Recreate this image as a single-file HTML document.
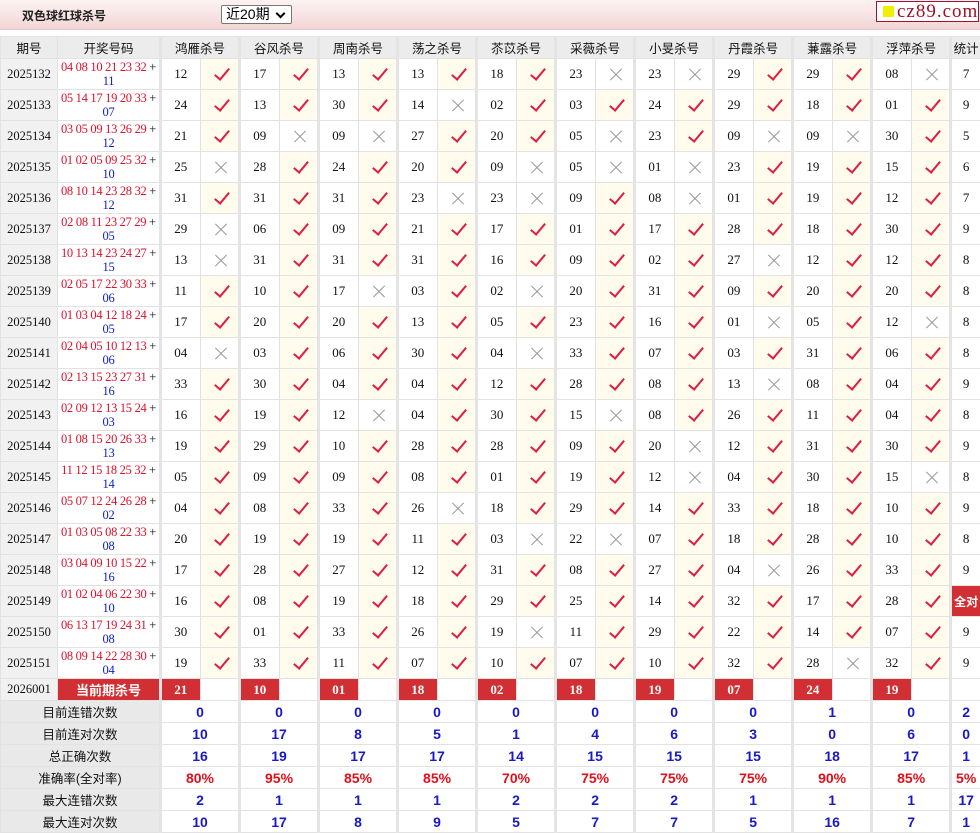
<!DOCTYPE html>
<html><head><meta charset="utf-8"><style>
*{margin:0;padding:0;box-sizing:border-box}
body{width:980px;height:833px;background:#fff;font-family:"Liberation Serif","Noto Serif CJK SC",serif;overflow:hidden;position:relative}
.top{position:absolute;left:0;top:0;width:980px;height:30px;background:linear-gradient(#fdf3f3,#f3d6d6);border-bottom:1px solid #e6caca}
.title{position:absolute;left:22px;top:7px;font:bold 12px "Liberation Sans","Noto Sans CJK SC",sans-serif;color:#222}
.sel{position:absolute;left:221px;top:5px;width:71px;height:19px;border:1px solid #777;border-radius:2px;background:#fff;font:14px "Liberation Sans","Noto Sans CJK SC",sans-serif;padding-left:4px;line-height:17px}
.sel:after{content:"";position:absolute;right:7px;top:4px;width:5px;height:5px;border-right:2px solid #000;border-bottom:2px solid #000;transform:rotate(45deg)}
.logo{position:absolute;left:876px;top:1px;width:103px;height:21px;border:1px solid #a01030;background:#fff;font:19px "Liberation Serif",serif;color:#a0102a;line-height:19px;padding-left:20px;letter-spacing:1px}
.logo:before{content:"";position:absolute;left:6px;top:4px;width:11px;height:11px;background:#f0f000}
table{position:absolute;left:0;top:36px;width:980px;border-collapse:collapse;table-layout:fixed}
td,th{border:1px solid #e2e2e2;text-align:center;font-size:13px;color:#111;padding:0;position:relative;overflow:hidden}
th{height:22px;background:#ececec;font:normal 12.5px "Liberation Sans","Noto Sans CJK SC",sans-serif}
tr.d td{height:31px}
td.q{background:#f1f1f1;font-size:12.5px}
td.k{line-height:14px;font-size:12.5px;text-align:center;white-space:nowrap;letter-spacing:-0.3px}
td.k i{font-style:normal;color:#e0102a}
td.k b{font-weight:normal;color:#1020d0}
.g{border-left:3px solid #e4e4e4}
td.y{background:#fffcee}
td.y:after{content:"";position:absolute;left:17px;top:50%;margin-top:-9px;width:6px;height:13px;border-right:2px solid #dd2040;border-bottom:2px solid #dd2040;transform:rotate(40deg)}
td.x:before,td.x:after{content:"";position:absolute;left:12px;top:50%;width:16px;height:1px;background:#9a9a9a;transform:rotate(45deg)}
td.x:after{transform:rotate(-45deg)}
tr.c td{height:22px}
td.r{background:#d12f33;color:#fff;font-weight:bold;font-size:13px}
td.rl{background:#d12f33;color:#fff;font:bold 13px "Liberation Sans","Noto Sans CJK SC",sans-serif}
td.all{background:#d12f33;color:#fff;font:bold 12px "Liberation Sans","Noto Sans CJK SC",sans-serif}
tr.s td{height:22px;font:bold 14px "Liberation Sans",sans-serif;color:#1818c8}
tr.s td.l{background:#e9e9e9;font:12.5px "Liberation Sans","Noto Sans CJK SC",sans-serif;color:#111}
tr.p td{color:#e0101a}
</style></head><body>
<div class="top"><div class="title">双色球红球杀号</div><div class="sel">近20期</div><div class="logo">cz89.com</div></div>
<table>
<colgroup><col style="width:57px"><col style="width:103px"><col span="20" style="width:39.5px"><col style="width:30px"></colgroup>
<tr><th>期号</th><th>开奖号码</th><th class="g" colspan="2">鸿雁杀号</th><th class="g" colspan="2">谷风杀号</th><th class="g" colspan="2">周南杀号</th><th class="g" colspan="2">荡之杀号</th><th class="g" colspan="2">苶苡杀号</th><th class="g" colspan="2">采薇杀号</th><th class="g" colspan="2">小旻杀号</th><th class="g" colspan="2">丹霞杀号</th><th class="g" colspan="2">蒹露杀号</th><th class="g" colspan="2">浮萍杀号</th><th class="g">统计</th></tr>
<tr class="d"><td class="q">2025132</td><td class="k"><i>04 08 10 21 23 32</i> +<br><b>11</b></td><td class="g">12</td><td class="y"></td><td class="g">17</td><td class="y"></td><td class="g">13</td><td class="y"></td><td class="g">13</td><td class="y"></td><td class="g">18</td><td class="y"></td><td class="g">23</td><td class="x"></td><td class="g">23</td><td class="x"></td><td class="g">29</td><td class="y"></td><td class="g">29</td><td class="y"></td><td class="g">08</td><td class="x"></td><td class="g">7</td></tr>
<tr class="d"><td class="q">2025133</td><td class="k"><i>05 14 17 19 20 33</i> +<br><b>07</b></td><td class="g">24</td><td class="y"></td><td class="g">13</td><td class="y"></td><td class="g">30</td><td class="y"></td><td class="g">14</td><td class="x"></td><td class="g">02</td><td class="y"></td><td class="g">03</td><td class="y"></td><td class="g">24</td><td class="y"></td><td class="g">29</td><td class="y"></td><td class="g">18</td><td class="y"></td><td class="g">01</td><td class="y"></td><td class="g">9</td></tr>
<tr class="d"><td class="q">2025134</td><td class="k"><i>03 05 09 13 26 29</i> +<br><b>12</b></td><td class="g">21</td><td class="y"></td><td class="g">09</td><td class="x"></td><td class="g">09</td><td class="x"></td><td class="g">27</td><td class="y"></td><td class="g">20</td><td class="y"></td><td class="g">05</td><td class="x"></td><td class="g">23</td><td class="y"></td><td class="g">09</td><td class="x"></td><td class="g">09</td><td class="x"></td><td class="g">30</td><td class="y"></td><td class="g">5</td></tr>
<tr class="d"><td class="q">2025135</td><td class="k"><i>01 02 05 09 25 32</i> +<br><b>10</b></td><td class="g">25</td><td class="x"></td><td class="g">28</td><td class="y"></td><td class="g">24</td><td class="y"></td><td class="g">20</td><td class="y"></td><td class="g">09</td><td class="x"></td><td class="g">05</td><td class="x"></td><td class="g">01</td><td class="x"></td><td class="g">23</td><td class="y"></td><td class="g">19</td><td class="y"></td><td class="g">15</td><td class="y"></td><td class="g">6</td></tr>
<tr class="d"><td class="q">2025136</td><td class="k"><i>08 10 14 23 28 32</i> +<br><b>12</b></td><td class="g">31</td><td class="y"></td><td class="g">31</td><td class="y"></td><td class="g">31</td><td class="y"></td><td class="g">23</td><td class="x"></td><td class="g">23</td><td class="x"></td><td class="g">09</td><td class="y"></td><td class="g">08</td><td class="x"></td><td class="g">01</td><td class="y"></td><td class="g">19</td><td class="y"></td><td class="g">12</td><td class="y"></td><td class="g">7</td></tr>
<tr class="d"><td class="q">2025137</td><td class="k"><i>02 08 11 23 27 29</i> +<br><b>05</b></td><td class="g">29</td><td class="x"></td><td class="g">06</td><td class="y"></td><td class="g">09</td><td class="y"></td><td class="g">21</td><td class="y"></td><td class="g">17</td><td class="y"></td><td class="g">01</td><td class="y"></td><td class="g">17</td><td class="y"></td><td class="g">28</td><td class="y"></td><td class="g">18</td><td class="y"></td><td class="g">30</td><td class="y"></td><td class="g">9</td></tr>
<tr class="d"><td class="q">2025138</td><td class="k"><i>10 13 14 23 24 27</i> +<br><b>15</b></td><td class="g">13</td><td class="x"></td><td class="g">31</td><td class="y"></td><td class="g">31</td><td class="y"></td><td class="g">31</td><td class="y"></td><td class="g">16</td><td class="y"></td><td class="g">09</td><td class="y"></td><td class="g">02</td><td class="y"></td><td class="g">27</td><td class="x"></td><td class="g">12</td><td class="y"></td><td class="g">12</td><td class="y"></td><td class="g">8</td></tr>
<tr class="d"><td class="q">2025139</td><td class="k"><i>02 05 17 22 30 33</i> +<br><b>06</b></td><td class="g">11</td><td class="y"></td><td class="g">10</td><td class="y"></td><td class="g">17</td><td class="x"></td><td class="g">03</td><td class="y"></td><td class="g">02</td><td class="x"></td><td class="g">20</td><td class="y"></td><td class="g">31</td><td class="y"></td><td class="g">09</td><td class="y"></td><td class="g">20</td><td class="y"></td><td class="g">20</td><td class="y"></td><td class="g">8</td></tr>
<tr class="d"><td class="q">2025140</td><td class="k"><i>01 03 04 12 18 24</i> +<br><b>05</b></td><td class="g">17</td><td class="y"></td><td class="g">20</td><td class="y"></td><td class="g">20</td><td class="y"></td><td class="g">13</td><td class="y"></td><td class="g">05</td><td class="y"></td><td class="g">23</td><td class="y"></td><td class="g">16</td><td class="y"></td><td class="g">01</td><td class="x"></td><td class="g">05</td><td class="y"></td><td class="g">12</td><td class="x"></td><td class="g">8</td></tr>
<tr class="d"><td class="q">2025141</td><td class="k"><i>02 04 05 10 12 13</i> +<br><b>06</b></td><td class="g">04</td><td class="x"></td><td class="g">03</td><td class="y"></td><td class="g">06</td><td class="y"></td><td class="g">30</td><td class="y"></td><td class="g">04</td><td class="x"></td><td class="g">33</td><td class="y"></td><td class="g">07</td><td class="y"></td><td class="g">03</td><td class="y"></td><td class="g">31</td><td class="y"></td><td class="g">06</td><td class="y"></td><td class="g">8</td></tr>
<tr class="d"><td class="q">2025142</td><td class="k"><i>02 13 15 23 27 31</i> +<br><b>16</b></td><td class="g">33</td><td class="y"></td><td class="g">30</td><td class="y"></td><td class="g">04</td><td class="y"></td><td class="g">04</td><td class="y"></td><td class="g">12</td><td class="y"></td><td class="g">28</td><td class="y"></td><td class="g">08</td><td class="y"></td><td class="g">13</td><td class="x"></td><td class="g">08</td><td class="y"></td><td class="g">04</td><td class="y"></td><td class="g">9</td></tr>
<tr class="d"><td class="q">2025143</td><td class="k"><i>02 09 12 13 15 24</i> +<br><b>03</b></td><td class="g">16</td><td class="y"></td><td class="g">19</td><td class="y"></td><td class="g">12</td><td class="x"></td><td class="g">04</td><td class="y"></td><td class="g">30</td><td class="y"></td><td class="g">15</td><td class="x"></td><td class="g">08</td><td class="y"></td><td class="g">26</td><td class="y"></td><td class="g">11</td><td class="y"></td><td class="g">04</td><td class="y"></td><td class="g">8</td></tr>
<tr class="d"><td class="q">2025144</td><td class="k"><i>01 08 15 20 26 33</i> +<br><b>13</b></td><td class="g">19</td><td class="y"></td><td class="g">29</td><td class="y"></td><td class="g">10</td><td class="y"></td><td class="g">28</td><td class="y"></td><td class="g">28</td><td class="y"></td><td class="g">09</td><td class="y"></td><td class="g">20</td><td class="x"></td><td class="g">12</td><td class="y"></td><td class="g">31</td><td class="y"></td><td class="g">30</td><td class="y"></td><td class="g">9</td></tr>
<tr class="d"><td class="q">2025145</td><td class="k"><i>11 12 15 18 25 32</i> +<br><b>14</b></td><td class="g">05</td><td class="y"></td><td class="g">09</td><td class="y"></td><td class="g">09</td><td class="y"></td><td class="g">08</td><td class="y"></td><td class="g">01</td><td class="y"></td><td class="g">19</td><td class="y"></td><td class="g">12</td><td class="x"></td><td class="g">04</td><td class="y"></td><td class="g">30</td><td class="y"></td><td class="g">15</td><td class="x"></td><td class="g">8</td></tr>
<tr class="d"><td class="q">2025146</td><td class="k"><i>05 07 12 24 26 28</i> +<br><b>02</b></td><td class="g">04</td><td class="y"></td><td class="g">08</td><td class="y"></td><td class="g">33</td><td class="y"></td><td class="g">26</td><td class="x"></td><td class="g">18</td><td class="y"></td><td class="g">29</td><td class="y"></td><td class="g">14</td><td class="y"></td><td class="g">33</td><td class="y"></td><td class="g">18</td><td class="y"></td><td class="g">10</td><td class="y"></td><td class="g">9</td></tr>
<tr class="d"><td class="q">2025147</td><td class="k"><i>01 03 05 08 22 33</i> +<br><b>08</b></td><td class="g">20</td><td class="y"></td><td class="g">19</td><td class="y"></td><td class="g">19</td><td class="y"></td><td class="g">11</td><td class="y"></td><td class="g">03</td><td class="x"></td><td class="g">22</td><td class="x"></td><td class="g">07</td><td class="y"></td><td class="g">18</td><td class="y"></td><td class="g">28</td><td class="y"></td><td class="g">10</td><td class="y"></td><td class="g">8</td></tr>
<tr class="d"><td class="q">2025148</td><td class="k"><i>03 04 09 10 15 22</i> +<br><b>16</b></td><td class="g">17</td><td class="y"></td><td class="g">28</td><td class="y"></td><td class="g">27</td><td class="y"></td><td class="g">12</td><td class="y"></td><td class="g">31</td><td class="y"></td><td class="g">08</td><td class="y"></td><td class="g">27</td><td class="y"></td><td class="g">04</td><td class="x"></td><td class="g">26</td><td class="y"></td><td class="g">33</td><td class="y"></td><td class="g">9</td></tr>
<tr class="d"><td class="q">2025149</td><td class="k"><i>01 02 04 06 22 30</i> +<br><b>10</b></td><td class="g">16</td><td class="y"></td><td class="g">08</td><td class="y"></td><td class="g">19</td><td class="y"></td><td class="g">18</td><td class="y"></td><td class="g">29</td><td class="y"></td><td class="g">25</td><td class="y"></td><td class="g">14</td><td class="y"></td><td class="g">32</td><td class="y"></td><td class="g">17</td><td class="y"></td><td class="g">28</td><td class="y"></td><td class="g all">全对</td></tr>
<tr class="d"><td class="q">2025150</td><td class="k"><i>06 13 17 19 24 31</i> +<br><b>08</b></td><td class="g">30</td><td class="y"></td><td class="g">01</td><td class="y"></td><td class="g">33</td><td class="y"></td><td class="g">26</td><td class="y"></td><td class="g">19</td><td class="x"></td><td class="g">11</td><td class="y"></td><td class="g">29</td><td class="y"></td><td class="g">22</td><td class="y"></td><td class="g">14</td><td class="y"></td><td class="g">07</td><td class="y"></td><td class="g">9</td></tr>
<tr class="d"><td class="q">2025151</td><td class="k"><i>08 09 14 22 28 30</i> +<br><b>04</b></td><td class="g">19</td><td class="y"></td><td class="g">33</td><td class="y"></td><td class="g">11</td><td class="y"></td><td class="g">07</td><td class="y"></td><td class="g">10</td><td class="y"></td><td class="g">07</td><td class="y"></td><td class="g">10</td><td class="y"></td><td class="g">32</td><td class="y"></td><td class="g">28</td><td class="x"></td><td class="g">32</td><td class="y"></td><td class="g">9</td></tr>
<tr class="c"><td class="q">2026001</td><td class="rl">当前期杀号</td><td class="g r">21</td><td></td><td class="g r">10</td><td></td><td class="g r">01</td><td></td><td class="g r">18</td><td></td><td class="g r">02</td><td></td><td class="g r">18</td><td></td><td class="g r">19</td><td></td><td class="g r">07</td><td></td><td class="g r">24</td><td></td><td class="g r">19</td><td></td><td class="g"></td></tr>
<tr class="s"><td class="l" colspan="2">目前连错次数</td><td class="g" colspan="2">0</td><td class="g" colspan="2">0</td><td class="g" colspan="2">0</td><td class="g" colspan="2">0</td><td class="g" colspan="2">0</td><td class="g" colspan="2">0</td><td class="g" colspan="2">0</td><td class="g" colspan="2">0</td><td class="g" colspan="2">1</td><td class="g" colspan="2">0</td><td class="g">2</td></tr>
<tr class="s"><td class="l" colspan="2">目前连对次数</td><td class="g" colspan="2">10</td><td class="g" colspan="2">17</td><td class="g" colspan="2">8</td><td class="g" colspan="2">5</td><td class="g" colspan="2">1</td><td class="g" colspan="2">4</td><td class="g" colspan="2">6</td><td class="g" colspan="2">3</td><td class="g" colspan="2">0</td><td class="g" colspan="2">6</td><td class="g">0</td></tr>
<tr class="s"><td class="l" colspan="2">总正确次数</td><td class="g" colspan="2">16</td><td class="g" colspan="2">19</td><td class="g" colspan="2">17</td><td class="g" colspan="2">17</td><td class="g" colspan="2">14</td><td class="g" colspan="2">15</td><td class="g" colspan="2">15</td><td class="g" colspan="2">15</td><td class="g" colspan="2">18</td><td class="g" colspan="2">17</td><td class="g">1</td></tr>
<tr class="s p"><td class="l" colspan="2">准确率(全对率)</td><td class="g" colspan="2">80%</td><td class="g" colspan="2">95%</td><td class="g" colspan="2">85%</td><td class="g" colspan="2">85%</td><td class="g" colspan="2">70%</td><td class="g" colspan="2">75%</td><td class="g" colspan="2">75%</td><td class="g" colspan="2">75%</td><td class="g" colspan="2">90%</td><td class="g" colspan="2">85%</td><td class="g">5%</td></tr>
<tr class="s"><td class="l" colspan="2">最大连错次数</td><td class="g" colspan="2">2</td><td class="g" colspan="2">1</td><td class="g" colspan="2">1</td><td class="g" colspan="2">1</td><td class="g" colspan="2">2</td><td class="g" colspan="2">2</td><td class="g" colspan="2">2</td><td class="g" colspan="2">1</td><td class="g" colspan="2">1</td><td class="g" colspan="2">1</td><td class="g">17</td></tr>
<tr class="s"><td class="l" colspan="2">最大连对次数</td><td class="g" colspan="2">10</td><td class="g" colspan="2">17</td><td class="g" colspan="2">8</td><td class="g" colspan="2">9</td><td class="g" colspan="2">5</td><td class="g" colspan="2">7</td><td class="g" colspan="2">7</td><td class="g" colspan="2">5</td><td class="g" colspan="2">16</td><td class="g" colspan="2">7</td><td class="g">1</td></tr>
</table>
</body></html>
